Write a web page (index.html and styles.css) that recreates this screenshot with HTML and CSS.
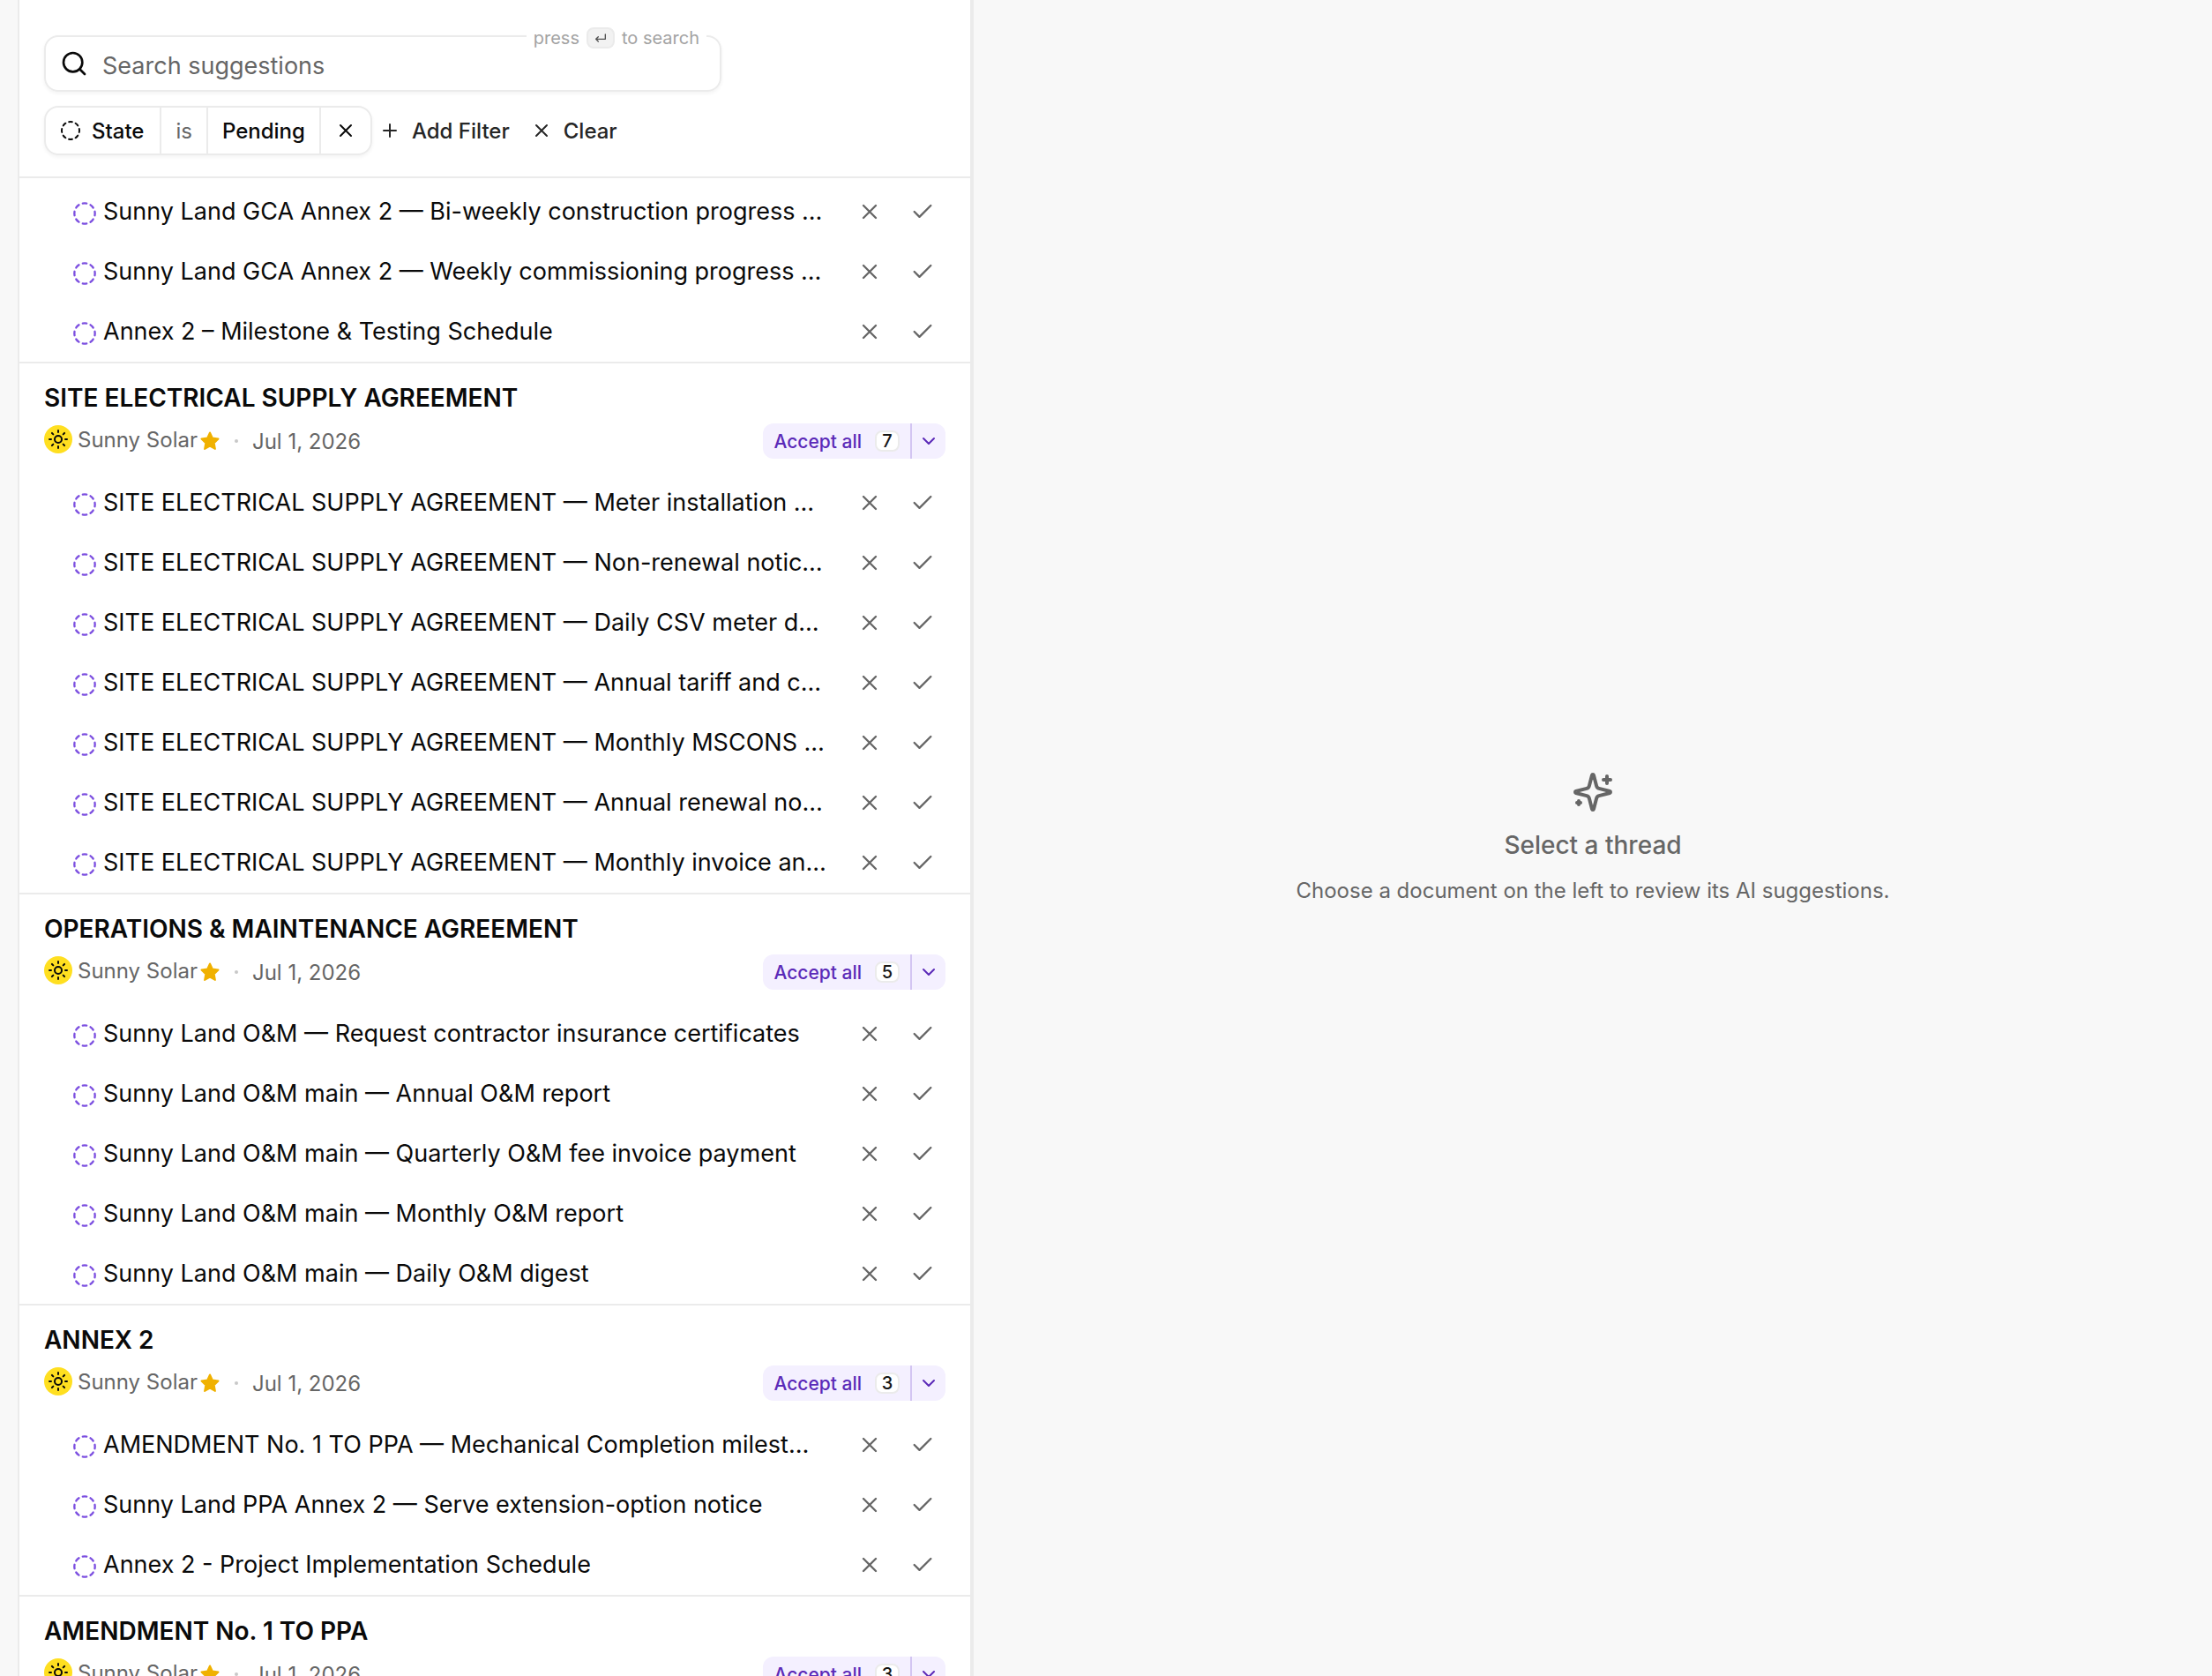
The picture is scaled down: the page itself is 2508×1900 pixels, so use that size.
FILE: index.html
```html
<!DOCTYPE html>
<html lang="en">
<head>
<meta charset="utf-8">
<title>Suggestions</title>
<link rel="stylesheet" href="styles.css">
</head>
<body>
<svg class="sprite" aria-hidden="true">
  <symbol id="i-x" viewBox="0 0 24 24"><path d="M18 6 6 18M6 6l12 12"/></symbol>
  <symbol id="i-check" viewBox="0 0 24 24"><path d="M20 6 9 17l-5-5"/></symbol>
  <symbol id="i-plus" viewBox="0 0 24 24"><path d="M5 12h14M12 5v14"/></symbol>
  <symbol id="i-chevron" viewBox="0 0 24 24"><path d="m6 9 6 6 6-6"/></symbol>
  <symbol id="i-search" viewBox="0 0 24 24"><circle cx="11" cy="11" r="8"/><path d="m21 21-4.3-4.3"/></symbol>
  <symbol id="i-enter" viewBox="0 0 24 24"><path d="M20 6v8H4M8 10l-4 4 4 4"/></symbol>
  <symbol id="i-pending" viewBox="0 0 24 24"><path d="M10.1 2.182a10 10 0 0 1 3.8 0M13.9 21.818a10 10 0 0 1-3.8 0M17.609 3.721a10 10 0 0 1 2.69 2.7M2.182 13.9a10 10 0 0 1 0-3.8M20.279 17.609a10 10 0 0 1-2.7 2.69M21.818 10.1a10 10 0 0 1 0 3.8M3.721 6.391a10 10 0 0 1 2.7-2.69M6.391 20.279a10 10 0 0 1-2.69-2.7"/></symbol>
  <symbol id="i-star" viewBox="0 0 24 24"><path d="m12 2.500 2.900 6.100 6.600.9-4.800 4.700 1.200 6.700L12 17.700l-5.900 3.200 1.200-6.700L2.500 9.500l6.600-.9z"/></symbol>
  <symbol id="i-sun" viewBox="0 0 24 24"><circle cx="12" cy="12" r="4"/><path d="M12 2v2M12 20v2M4.930 4.930l1.410 1.410M17.660 17.660l1.410 1.410M2 12h2M20 12h2M6.340 17.660l-1.410 1.410M19.070 4.930l-1.410 1.410"/></symbol>
  <symbol id="i-sparkles" viewBox="0 0 24 24"><path d="M9.937 15.5A2 2 0 0 0 8.5 14.063l-6.135-1.582a.5.5 0 0 1 0-.962L8.5 9.936A2 2 0 0 0 9.937 8.5l1.582-6.135a.5.5 0 0 1 .963 0L14.063 8.5A2 2 0 0 0 15.5 9.937l6.135 1.581a.5.5 0 0 1 0 .964L15.5 14.063a2 2 0 0 0-1.437 1.437l-1.582 6.135a.5.5 0 0 1-.963 0zM20 3v4M22 5h-4M4 17v2M5 18H3"/></symbol>
</svg>
<div class="app">
  <main class="panel">
    <header class="toolbar">
      <form class="search">
        <svg class="icon icon-search"><use href="#i-search"/></svg>
        <input class="search-input" type="search" placeholder="Search suggestions" aria-label="Search suggestions">
        <span class="hint">press <kbd class="key"><svg class="icon icon-key"><use href="#i-enter"/></svg></kbd> to search</span>
      </form>
      <div class="filters">
        <div class="chip">
          <button class="chip-part chip-field" type="button"><svg class="icon icon-state"><use href="#i-pending"/></svg>State</button>
          <button class="chip-part chip-op" type="button">is</button>
          <button class="chip-part chip-value" type="button">Pending</button>
          <button class="chip-part chip-remove" type="button" aria-label="Remove filter"><svg class="icon icon-small"><use href="#i-x"/></svg></button>
        </div>
        <button class="link-button" type="button"><svg class="icon icon-small"><use href="#i-plus"/></svg>Add Filter</button>
        <button class="link-button" type="button"><svg class="icon icon-small"><use href="#i-x"/></svg>Clear</button>
      </div>
    </header>
    <div class="threads" id="threads"></div>
  </main>
  <aside class="detail">
    <svg class="icon icon-sparkles"><use href="#i-sparkles"/></svg>
    <h2 class="detail-title">Select a thread</h2>
    <p class="detail-text">Choose a document on the left to review its AI suggestions.</p>
  </aside>
</div>
<script src="threads.js"></script>
</body>
</html>
```
FILE: styles.css
```css
* { box-sizing: border-box; }
body {
  margin: 0;
  font-family: Inter, "Liberation Sans", sans-serif;
  font-size: 27px;
  color: #0a0a0a;
  background: #f8f8f8;
}
button, input { font: inherit; color: inherit; background: none; border: 0; padding: 0; margin: 0; }
button { cursor: pointer; }
h2, p, ul { margin: 0; padding: 0; }
.sprite { position: absolute; width: 0; height: 0; }
.icon {
  flex: none;
  display: block;
  fill: none;
  stroke: currentColor;
  stroke-width: 2;
  stroke-linecap: round;
  stroke-linejoin: round;
}
.app { display: flex; height: 100vh; padding-left: 20px; overflow: hidden; }
.panel {
  flex: 0 1 1084px;
  min-width: 0;
  display: flex;
  flex-direction: column;
  background: #fff;
  border-left: 2px solid #ebebeb;
  border-right: 4px solid #ebebeb;
}
.toolbar {
  flex: none;
  display: flex;
  flex-direction: column;
  gap: 16px;
  padding: 40px 28px 24px;
  border-bottom: 2px solid #ebebeb;
}
.search {
  position: relative;
  display: flex;
  align-items: center;
  gap: 16px;
  width: 100%;
  max-width: 768px;
  height: 64px;
  padding: 0 16px;
  border: 2px solid #ebebeb;
  border-radius: 16px;
  box-shadow: 0 2px 4px rgba(0, 0, 0, 0.05);
}
.icon-search { width: 32px; height: 32px; }
.search-input { flex: 1; min-width: 0; padding-top: 4px; outline: 0; appearance: none; }
.search-input::placeholder { color: #666; opacity: 1; }
.hint {
  position: absolute;
  top: -13px;
  right: 15px;
  display: flex;
  align-items: center;
  gap: 8px;
  height: 28px;
  padding: 0 8px;
  font-size: 20px;
  color: #a3a3a3;
  background: #fff;
}
.key {
  display: flex;
  align-items: center;
  justify-content: center;
  width: 32px;
  height: 24px;
  border: 2px solid #ebebeb;
  border-radius: 8px;
  background: #f2f2f2;
  color: #525252;
}
.icon-key { width: 16px; height: 16px; }
.filters { display: flex; align-items: center; font-size: 24px; font-weight: 500; }
.chip {
  display: flex;
  height: 56px;
  border: 2px solid #ebebeb;
  border-radius: 16px;
  box-shadow: 0 2px 4px rgba(0, 0, 0, 0.05);
}
.chip-part { display: flex; align-items: center; gap: 12px; padding: 0 16px; }
.chip-part + .chip-part { border-left: 2px solid #ebebeb; }
.chip-field { padding-right: 18px; }
.chip-op { font-weight: 400; color: #666; }
.icon-state { width: 24px; height: 24px; }
.icon-small { width: 24px; height: 24px; }
.link-button { display: flex; align-items: center; gap: 13px; margin-left: 8px; padding: 0 8px 0 0; color: #262626; }
.link-button + .link-button { margin-left: 16px; }
.threads { flex: 1; min-height: 0; overflow: hidden; padding-top: 4px; }
.group + .group { border-top: 2px solid #ebebeb; }
.group-head { display: flex; flex-direction: column; gap: 10px; padding: 20px 28px 16px; }
.group-title { font-size: 28px; line-height: 38px; font-weight: 600; }
.meta { display: flex; align-items: center; height: 40px; font-size: 24px; color: #666; }
.party { display: flex; align-items: center; padding-bottom: 4px; }
.avatar {
  display: flex;
  align-items: center;
  justify-content: center;
  width: 32px;
  height: 32px;
  margin-right: 6px;
  border-radius: 50%;
  background: #ffdf20;
  color: #0a0a0a;
}
.icon-sun { width: 24px; height: 24px; }
.icon-star { width: 24px; height: 24px; margin-left: 2px; fill: #f0b100; stroke: #f0b100; }
.dot { width: 4px; height: 4px; margin: 0 16px; border-radius: 50%; background: #c8c8c8; }
.accept { display: flex; height: 40px; margin-left: auto; border-radius: 12px; overflow: hidden; background: #f4f0ff; color: #5b2ab8; }
.accept-main { display: flex; align-items: center; gap: 15px; padding: 0 12px; font-size: 21px; font-weight: 500; }
.count {
  min-width: 28px;
  height: 24px;
  border: 2px solid #ebebeb;
  border-radius: 8px;
  background: #fff;
  color: #171717;
  font-size: 20px;
  line-height: 20px;
  text-align: center;
}
.accept-more { display: flex; align-items: center; justify-content: center; width: 40px; border-left: 2px solid #d3c5f2; }
.icon-chevron { width: 24px; height: 24px; }
.items { list-style: none; }
.item { display: flex; align-items: center; height: 68px; padding: 0 24px 0 60px; }
.item-link {
  flex: 1;
  min-width: 0;
  display: flex;
  align-items: center;
  gap: 7px;
  margin-right: 8px;
  color: inherit;
  text-decoration: none;
}
.item-title { overflow: hidden; white-space: nowrap; text-overflow: ellipsis; line-height: 40px; }
.icon-pending { width: 28px; height: 28px; margin-top: 4px; color: #7c4fe0; }
.action { flex: none; display: flex; align-items: center; justify-content: center; width: 60px; height: 56px; color: #666; }
.icon-action { width: 28px; height: 28px; }
.detail {
  flex: 1;
  min-width: 0;
  display: flex;
  flex-direction: column;
  align-items: center;
  justify-content: center;
  color: #666;
  text-align: center;
}
.icon-sparkles { width: 48px; height: 48px; }
.detail-title { margin-top: 16px; font-size: 28px; line-height: 40px; font-weight: 500; }
.detail-text { margin-top: 16px; font-size: 24px; line-height: 32px; }
```
FILE: threads.js
```js
const site = "SITE ELECTRICAL SUPPLY AGREEMENT";
const groups = [
  { items: [
    "Sunny Land GCA Annex 2 — Bi-weekly construction progress …",
    "Sunny Land GCA Annex 2 — Weekly commissioning progress …",
    "Annex 2 – Milestone & Testing Schedule" ] },
  { title: site, count: 7, items: [
    site + " — Meter installation …",
    site + " — Non-renewal notic…",
    site + " — Daily CSV meter d…",
    site + " — Annual tariff and c…",
    site + " — Monthly MSCONS …",
    site + " — Annual renewal no…",
    site + " — Monthly invoice an…" ] },
  { title: "OPERATIONS & MAINTENANCE AGREEMENT", count: 5, items: [
    "Sunny Land O&M — Request contractor insurance certificates",
    "Sunny Land O&M main — Annual O&M report",
    "Sunny Land O&M main — Quarterly O&M fee invoice payment",
    "Sunny Land O&M main — Monthly O&M report",
    "Sunny Land O&M main — Daily O&M digest" ] },
  { title: "ANNEX 2", count: 3, items: [
    "AMENDMENT No. 1 TO PPA — Mechanical Completion milest…",
    "Sunny Land PPA Annex 2 — Serve extension-option notice",
    "Annex 2 - Project Implementation Schedule" ] },
  { title: "AMENDMENT No. 1 TO PPA", count: 3, items: [] }
];
const esc = s => s.replace(/&/g, "&amp;");
const icon = (name, cls) => `<svg class="icon ${cls}"><use href="#i-${name}"/></svg>`;
const head = g => `<div class="group-head">
  <h2 class="group-title">${esc(g.title)}</h2>
  <div class="meta"><span class="party"><span class="avatar">${icon("sun", "icon-sun")}</span>Sunny Solar</span>${icon("star", "icon-star")}<span class="dot"></span><time datetime="2026-07-01">Jul 1, 2026</time>
  <div class="accept"><button class="accept-main" type="button">Accept all<span class="count">${g.count}</span></button><button class="accept-more" type="button" aria-label="More options">${icon("chevron", "icon-chevron")}</button></div></div>
</div>`;
const item = t => `<li class="item"><a class="item-link" href="#">${icon("pending", "icon-pending")}<span class="item-title">${esc(t)}</span></a><button class="action" type="button" aria-label="Dismiss">${icon("x", "icon-action")}</button><button class="action" type="button" aria-label="Accept">${icon("check", "icon-action")}</button></li>`;
document.getElementById("threads").innerHTML = groups.map(g =>
  `<section class="group">${g.title ? head(g) : ""}<ul class="items">${g.items.map(item).join("")}</ul></section>`).join("");
```
